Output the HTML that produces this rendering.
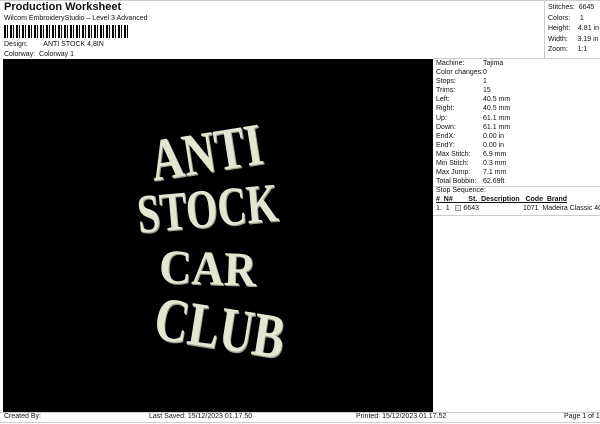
<!DOCTYPE html>
<html><head><style>
*{margin:0;padding:0;box-sizing:border-box}
body{width:600px;height:424px;background:#fff;font-family:"Liberation Sans",sans-serif;position:relative;overflow:hidden;color:#111}
.a{position:absolute;white-space:nowrap}
.s{font-size:7px}
.bk{position:absolute;left:3px;top:59px;width:430px;height:353px;background:#000}
.w{position:absolute;color:#e4e6d2;font-family:"Liberation Serif",serif;font-weight:bold;text-shadow:1px 1px 0 #9a9c8c;transform-origin:left top;letter-spacing:0px;line-height:1}
.r{line-height:9.1px}
</style></head><body>
<div class="a" style="left:4px;top:1px;font-size:11px;font-weight:bold">Production Worksheet</div>
<div class="a s" style="left:4px;top:15px">Wilcom EmbroideryStudio – Level 3 Advanced</div>
<div class="a" style="left:4px;top:25px;width:126px;height:13px;background:repeating-linear-gradient(90deg,#000 0 2px,#fff 2px 3px,#000 3px 4px,#fff 4px 6px)"></div>
<div class="a s" style="left:4px;top:41px">Design:&nbsp;&nbsp;&nbsp;&nbsp;&nbsp;&nbsp;&nbsp;&nbsp;ANTI STOCK 4,8IN</div>
<div class="a s" style="left:4px;top:51px">Colorway:&nbsp;&nbsp;Colorway 1</div>
<div style="position:absolute;left:0;top:0;width:600px;height:1px;background:#ccc"></div>
<div style="position:absolute;left:544px;top:0;width:1px;height:58px;background:#ccc"></div>
<div style="position:absolute;left:433px;top:58px;width:167px;height:1px;background:#ccc"></div>
<div class="a s" style="left:548px;top:3px;line-height:10.5px">Stitches:&nbsp;&nbsp;6645<br>Colors:&nbsp;&nbsp;&nbsp;&nbsp;&nbsp;1<br>Height:&nbsp;&nbsp;&nbsp;&nbsp;4.81 in<br>Width:&nbsp;&nbsp;&nbsp;&nbsp;&nbsp;3.19 in<br>Zoom:&nbsp;&nbsp;&nbsp;&nbsp;&nbsp;1:1</div>
<div class="bk"></div>
<div class="w" style="left:146px;top:132px;font-size:46px;transform:rotate(-9deg) scale(0.98,1.3)">ANTI</div>
<div class="w" style="left:135px;top:188px;font-size:44px;transform:rotate(-5deg) scale(0.92,1.25)">STOCK</div>
<div class="w" style="left:160px;top:243px;font-size:44px;transform:rotate(2deg) scale(1.02,1.1)">CAR</div>
<div class="w" style="left:160px;top:288px;font-size:48px;transform:rotate(9deg) scale(0.98,1.3)">CLUB</div>
<div class="a s r" style="left:436px;top:59px">Machine:<br>Color changes:<br>Stops:<br>Trims:<br>Left:<br>Right:<br>Up:<br>Down:<br>EndX:<br>EndY:<br>Max Stitch:<br>Min Stitch:<br>Max Jump:<br>Total Bobbin:</div>
<div class="a s r" style="left:483px;top:59px">Tajima<br>0<br>1<br>15<br>40.5 mm<br>40.5 mm<br>61.1 mm<br>61.1 mm<br>0.00 in<br>0.00 in<br>6.9 mm<br>0.3 mm<br>7.1 mm<br>62.69ft</div>
<div style="position:absolute;left:433px;top:186px;width:167px;height:1px;background:#ccc"></div>
<div class="a s" style="left:436px;top:187px">Stop Sequence:</div>
<div class="a s" style="left:436px;top:196px;font-weight:bold;text-decoration:underline">#&nbsp;&nbsp;N#&nbsp;&nbsp;&nbsp;&nbsp;&nbsp;&nbsp;&nbsp;&nbsp;St.&nbsp;&nbsp;Description&nbsp;&nbsp;&nbsp;Code&nbsp;&nbsp;Brand</div>
<div class="a s" style="left:436px;top:205px">1.&nbsp;&nbsp;1&nbsp;&nbsp;&nbsp;<span style="display:inline-block;width:6px;height:6px;border:1px solid #999;background:#e8e8dc;vertical-align:-1px"></span> 6643</div>
<div class="a s" style="left:523px;top:205px">1071&nbsp;&nbsp;Madeira Classic 40</div>
<div style="position:absolute;left:433px;top:215px;width:167px;height:1px;background:#ccc"></div>
<div style="position:absolute;left:0;top:412px;width:600px;height:1px;background:#ccc"></div>
<div style="position:absolute;left:0;top:422px;width:600px;height:1px;background:#ccc"></div>
<div class="a s" style="left:4px;top:413px">Created By:</div>
<div class="a s" style="left:149px;top:413px">Last Saved: 15/12/2023 01.17.50</div>
<div class="a s" style="left:356px;top:413px">Printed: 15/12/2023 01.17.52</div>
<div class="a s" style="left:564px;top:413px">Page 1 of 1</div>
</body></html>
